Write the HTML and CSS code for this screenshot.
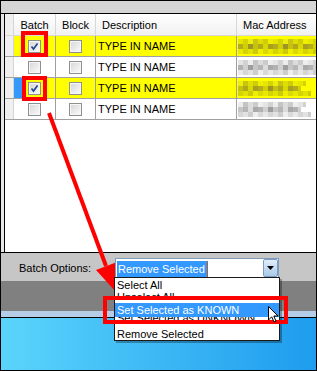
FILE: index.html
```html
<!DOCTYPE html>
<html lang="en">
<head>
    <meta charset="UTF-8">
    <meta name="viewport" content="width=device-width, initial-scale=1.0">
    <title>Batch Options</title>
    <link rel="stylesheet" href="styles.css">
</head>
<body>
<div class="screen">
    <div class="topbar"></div>

    <div class="listwrap">
        <div class="list">
            <div class="grid-row grid-head">
                <div class="cell rowhead"></div>
                <div class="cell center">Batch</div>
                <div class="cell center">Block</div>
                <div class="cell">Description</div>
                <div class="cell last">Mac Address</div>
            </div>

            <div class="grid-row unknown">
                <div class="cell rowhead"></div>
                <div class="cell center"><span class="cb checked"><svg viewBox="0 0 11 11"><path d="M2.5 5.5 L4.5 8 L8.5 2.5"/></svg></span></div>
                <div class="cell center"><span class="cb"></span></div>
                <div class="cell text">TYPE IN NAME</div>
                <div class="cell last"><div class="mosaic yellow"></div></div>
            </div>

            <div class="grid-row">
                <div class="cell rowhead"></div>
                <div class="cell center"><span class="cb"></span></div>
                <div class="cell center"><span class="cb"></span></div>
                <div class="cell text">TYPE IN NAME</div>
                <div class="cell last"><div class="mosaic"></div></div>
            </div>

            <div class="grid-row unknown">
                <div class="cell rowhead"></div>
                <div class="cell center current"><span class="cb checked"><svg viewBox="0 0 11 11"><path d="M2.5 5.5 L4.5 8 L8.5 2.5"/></svg></span></div>
                <div class="cell center"><span class="cb"></span></div>
                <div class="cell text">TYPE IN NAME</div>
                <div class="cell last"><div class="mosaic yellow alt"></div></div>
            </div>

            <div class="grid-row">
                <div class="cell rowhead"></div>
                <div class="cell center"><span class="cb"></span></div>
                <div class="cell center"><span class="cb"></span></div>
                <div class="cell text">TYPE IN NAME</div>
                <div class="cell last"><div class="mosaic alt"></div></div>
            </div>
        </div>
    </div>

    <div class="options">
        <span class="opt-label">Batch Options:</span>
        <div class="combo">
            <span class="combo-text"><span class="combo-sel">Remove Selected</span><span class="caret"></span></span>
            <span class="combo-btn"><svg viewBox="0 0 7 4"><path d="M0 0 H7 L3.5 4 Z"/></svg></span>
        </div>
    </div>
    <div class="taskband"></div>
    <div class="strip"></div>
    <div class="desktop"></div>

    <!-- annotations drawn over the screenshot -->
    <div class="mark mark-one"></div>
    <div class="mark mark-two"></div>
    <svg class="arrow" viewBox="0 0 317 371">
        <line x1="49" y1="113" x2="106" y2="266"/>
        <polygon points="116,292 96,270 116.4,262.3"/>
    </svg>

    <div class="droplist">
        <div class="item">Select All</div>
        <div class="item clip-top">Unselect All</div>
        <div class="gap"></div>
        <div class="item hot">Set Selected as KNOWN</div>
        <div class="item clip-bottom"><span>Set Selected as UNKNOWN</span></div>
        <div class="gap small"></div>
        <div class="item">Remove Selected</div>
    </div>
    <div class="callout"></div>
    <svg class="pointer" viewBox="0 0 11 17">
        <path d="M0.5 0.5 L0.5 14 L3.7 10.8 L6 16 L8 15.2 L5.8 10 L10 10 Z"/>
    </svg>
</div>
</body>
</html>
```
FILE: styles.css
```css
*{
    box-sizing: border-box;
}
body
{
    margin: 0;
    font-family: "Liberation Sans", Arial, sans-serif;
    font-size: 11px;
    color: #000;
}
.screen
{
    position: relative;
    width: 317px;
    height: 371px;
    border: 1px solid #000;
    display: flex;
    flex-direction: column;
    overflow: hidden;
}
.topbar
{
    height: 13px;
    flex: none;
    background: #d5d5d5;
    border-bottom: 1px solid #000;
}
.listwrap
{
    height: 239px;
    flex: none;
    display: flex;
    padding-left: 3px;
    background: #e6e6e6;
    border-bottom: 1px solid #000;
}
.list
{
    flex: 1;
    background: #fff;
    border-left: 1px solid #000;
}

/* grid rows */
.grid-row
{
    display: grid;
    grid-template-columns: 9px 42px 40px 141px 1fr;
    height: 21px;
    border-bottom: 1px solid #a0a0a0;
}
.grid-head
{
    height: 22px;
    border-bottom: 1px solid #d8d8d8;
    background: linear-gradient(#ffffff, #f1f1f1);
}
.cell
{
    display: flex;
    align-items: center;
    border-right: 1px solid #a0a0a0;
    white-space: nowrap;
    overflow: hidden;
}
.grid-head .cell
{
    border-right-color: #d8d8d8;
    padding-left: 6px;
}
.grid-head .cell.center
{
    padding-left: 0;
}
.cell.center
{
    justify-content: center;
}
.cell.last
{
    border-right: none;
}
.cell.rowhead
{
    background: #f0f0f0;
    border-right-color: #d4d4d4;
    padding-left: 0;
}
.cell.text
{
    padding-left: 2px;
}
.unknown .cell
{
    background: #ffff00;
}
.unknown .cell.rowhead
{
    background: #f0f0f0;
}
.unknown .cell.current
{
    background: linear-gradient(90deg, #3399ff 8px, #ffff00 8px);
}

/* checkbox */
.cb
{
    width: 13px;
    height: 13px;
    border: 1px solid #8e8f8f;
    background: linear-gradient(135deg, #d6d6d6, #fbfbfb);
    box-shadow: inset 0 0 0 1px #f6f6f6;
    display: flex;
}
.cb svg
{
    width: 11px;
    height: 11px;
}
.cb path
{
    fill: none;
    stroke: #1f4a8e;
    stroke-width: 1.7;
}

/* blurred mac address */
.mosaic
{
    flex: 1;
    height: 15px;
    margin-left: 1px;
    background:
        repeating-linear-gradient(90deg, #e4e4e4 0 5px, #d2d2d2 5px 10px, #ececec 10px 15px, #c4c4c4 15px 20px, #dcdcdc 20px 25px, #cbcbcb 25px 30px, #eeeeee 30px 35px) 0 0 / 100% 5px no-repeat,
        repeating-linear-gradient(90deg, #b2b2b2 0 5px, #d0d0d0 5px 10px, #9d9d9d 10px 15px, #c6c6c6 15px 20px, #b6b6b6 20px 25px, #dcdcdc 25px 30px, #a9a9a9 30px 35px) 0 5px / 100% 5px no-repeat,
        repeating-linear-gradient(90deg, #e8e8e8 0 5px, #d6d6d6 5px 10px, #e2e2e2 10px 15px, #cdcdcd 15px 20px, #eeeeee 20px 25px, #d9d9d9 25px 30px) 0 10px / 100% 5px no-repeat;
}
.mosaic.alt
{
    background-position: -10px 0, -15px 5px, -5px 10px;
}
.mosaic.yellow
{
    background:
        repeating-linear-gradient(90deg, #e6e600 0 5px, #d4d400 5px 10px, #ecec10 10px 15px, #c8c410 15px 20px, #dede00 20px 25px, #cfcc08 25px 30px, #eeee00 30px 35px) 0 0 / 100% 5px no-repeat,
        repeating-linear-gradient(90deg, #b4ac1c 0 5px, #d2d000 5px 10px, #9c9424 10px 15px, #c6c20c 15px 20px, #b0aa18 20px 25px, #dad800 25px 30px, #a8a01e 30px 35px) 0 5px / 100% 5px no-repeat,
        repeating-linear-gradient(90deg, #e8e800 0 5px, #d6d400 5px 10px, #e2e200 10px 15px, #cdca08 15px 20px, #eeee00 20px 25px, #dada00 25px 30px) 0 10px / 100% 5px no-repeat;
}
.mosaic.yellow.alt
{
    background-position: -10px 0, -15px 5px, -5px 10px;
}

/* bottom panel */
.options
{
    height: 28px;
    flex: none;
    display: flex;
    align-items: flex-start;
    padding: 5px 0 0 18px;
    background: #c6c6c6;
}
.opt-label
{
    width: 96px;
    line-height: 20px;
}
.combo
{
    position: relative;
    z-index: 3;
    width: 164px;
    height: 20px;
    display: flex;
    background: #fff;
    border: 1px solid #7f9db9;
}
.combo-text
{
    flex: 1;
    display: flex;
    align-items: center;
    padding: 1px 0 0 1px;
}
.combo-sel
{
    height: 16px;
    line-height: 16px;
    padding: 0 2px 0 1px;
    background: #3399ff;
    color: #fff;
}
.caret
{
    width: 1px;
    height: 16px;
    background: #c06020;
}
.combo-btn
{
    width: 15px;
    display: flex;
    align-items: center;
    justify-content: center;
    background: linear-gradient(#e2eefa, #a9c9e8);
    border: 1px solid #7b9cc4;
    border-radius: 2px;
}
.combo-btn svg
{
    width: 7px;
    height: 4px;
}
.taskband
{
    height: 30px;
    flex: none;
    background: #808080;
}
.strip
{
    height: 7px;
    flex: none;
    background: #b5cde6;
    border-bottom: 1px solid #000;
}
.desktop
{
    flex: 1;
    background: linear-gradient(90deg, #5bd4fb, #1e9cee);
}

/* overlays */
.mark
{
    position: absolute;
    z-index: 2;
    border: 4px solid #ff0000;
}
.mark-one
{
    left: 20px;
    top: 30px;
    width: 27px;
    height: 26px;
}
.mark-two
{
    left: 21px;
    top: 75px;
    width: 25px;
    height: 25px;
}
.arrow
{
    position: absolute;
    left: -1px;
    top: -1px;
    width: 317px;
    height: 371px;
    z-index: 2;
}
.arrow line
{
    stroke: #ff0000;
    stroke-width: 4;
}
.arrow polygon
{
    fill: #ff0000;
}
.droplist
{
    position: absolute;
    z-index: 4;
    left: 113px;
    top: 276px;
    width: 166px;
    height: 64px;
    padding-top: 1px;
    background: #fff;
    border: 1px solid #1a1a1a;
    box-shadow: 2px 2px 0 rgba(0, 0, 0, 0.3);
}
.item
{
    height: 12px;
    line-height: 12px;
    padding-left: 2px;
    white-space: nowrap;
    overflow: hidden;
}
.item.clip-top
{
    height: 6px;
}
.item.clip-bottom
{
    height: 7px;
}
.item.clip-bottom span
{
    display: block;
    margin-top: -5px;
}
.gap
{
    height: 6px;
}
.gap.small
{
    height: 4px;
}
.item.hot
{
    height: 14px;
    line-height: 14px;
    background: #3399ff;
    color: #fff;
}
.callout
{
    position: absolute;
    z-index: 5;
    left: 102px;
    top: 295px;
    width: 185px;
    height: 28px;
    border: 4px solid #ff0000;
}
.pointer
{
    position: absolute;
    z-index: 6;
    left: 267px;
    top: 305px;
    width: 11px;
    height: 17px;
}
.pointer path
{
    fill: #fff;
    stroke: #000;
    stroke-width: 1;
}
```
